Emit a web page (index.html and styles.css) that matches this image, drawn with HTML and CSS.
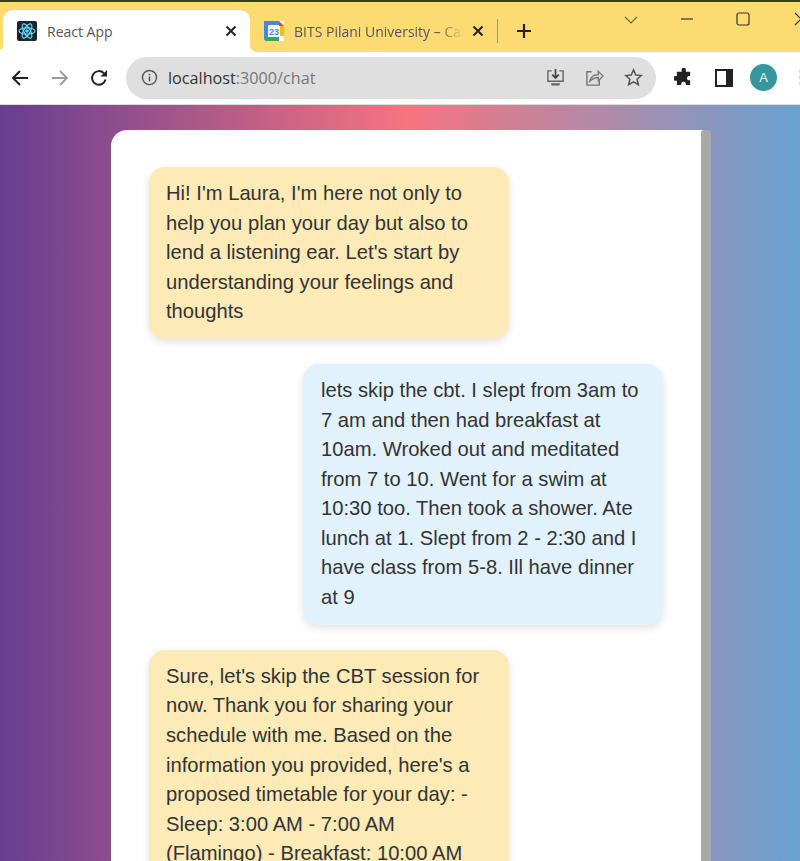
FILE: index.html

```html
<!DOCTYPE html>
<html lang="en">
<head>
  <meta charset="UTF-8">
  <title>React App</title>
  <link rel="stylesheet" href="styles.css">
</head>
<body>
  <!-- browser chrome -->
  <div class="tabstrip">
    <div class="tab active">
      <svg class="favicon" viewBox="0 0 20 20">
        <rect width="20" height="20" rx="2" fill="#20232a"/>
        <g fill="none" stroke="#61dafb" stroke-width="1.200">
          <ellipse cx="10" cy="10" rx="8" ry="3.200"/>
          <ellipse cx="10" cy="10" rx="8" ry="3.200" transform="rotate(60 10 10)"/>
          <ellipse cx="10" cy="10" rx="8" ry="3.200" transform="rotate(120 10 10)"/>
        </g>
        <circle cx="10" cy="10" r="1.800" fill="#61dafb"/>
      </svg>
      <span class="tab-title">React App</span>
      <svg class="tab-close" viewBox="0 0 12 12"><path d="M1.500 1.500l9 9M10.500 1.500l-9 9" stroke="#222" stroke-width="2" fill="none"/></svg>
    </div>
    <div class="tab">
      <svg class="favicon" viewBox="0 0 20 20">
        <rect width="20" height="20" fill="#fff"/>
        <path d="M0 0h15v4H4v12H0z" fill="#4285f4"/>
        <path d="M15 0l5 5h-5z" fill="#ea4335"/>
        <path d="M16 5h4v10h-4z" fill="#fbbc04"/>
        <path d="M0 16h15v4H2a2 2 0 0 1-2-2z" fill="#34a853"/>
        <text x="10" y="13.500" class="cal-num">23</text>
      </svg>
      <span class="tab-title fade">BITS Pilani University – Calendar</span>
      <svg class="tab-close" viewBox="0 0 12 12"><path d="M1.500 1.500l9 9M10.500 1.500l-9 9" stroke="#222" stroke-width="2" fill="none"/></svg>
    </div>
    <div class="tab-sep"></div>
    <svg class="new-tab" viewBox="0 0 16 16"><path d="M8 1v14M1 8h14" stroke="#222" stroke-width="2.200" fill="none"/></svg>
    <div class="window-btns">
      <svg class="win-chevron" viewBox="0 0 14 8"><path d="M1 1l6 6 6-6" stroke="#6f6446" stroke-width="1.200" fill="none"/></svg>
      <svg class="win-min" viewBox="0 0 14 2"><path d="M1 1h12" stroke="#3a3524" stroke-width="1.200"/></svg>
      <svg class="win-max" viewBox="0 0 14 14"><rect x="1" y="1" width="12" height="12" rx="2" stroke="#3a3524" stroke-width="1.200" fill="none"/></svg>
      <svg class="win-close" viewBox="0 0 14 14"><path d="M1 1l12 12M13 1L1 13" stroke="#3a3524" stroke-width="1.200" fill="none"/></svg>
    </div>
  </div>

  <div class="toolbar">
    <div class="nav-btns">
      <svg class="nav-icon" viewBox="0 0 18 18"><path d="M17 9H2M9 2L2 9l7 7" stroke="#222" stroke-width="2" fill="none"/></svg>
      <svg class="nav-icon" viewBox="0 0 18 18"><path d="M1 9h15M9 2l7 7-7 7" stroke="#9a9a9a" stroke-width="1.800" fill="none"/></svg>
      <svg class="nav-icon" viewBox="0 0 18 18"><path d="M15.500 10.500A6.800 6.800 0 1 1 13.800 4.200" stroke="#222" stroke-width="2" fill="none"/><path d="M10.500 7.500H17V1z" fill="#222"/></svg>
    </div>
    <div class="omnibox">
      <svg class="info-icon" viewBox="0 0 18 18"><circle cx="9" cy="9" r="7.500" stroke="#555" stroke-width="1.500" fill="none"/><path d="M9 8v5M9 5v1.500" stroke="#555" stroke-width="1.600"/></svg>
      <span class="url">localhost<span class="url-path">:3000/chat</span></span>
      <div class="omni-actions">
        <svg class="omni-icon" viewBox="0 0 20 20"><path d="M6 3H2v11h16V3h-4" stroke="#666" stroke-width="1.500" fill="none"/><path d="M10 1v9M6.500 7l3.500 3.500L13.500 7" stroke="#444" stroke-width="1.800" fill="none"/><path d="M5 16h10l-1 2.500H6z" fill="#666"/></svg>
        <svg class="omni-icon" viewBox="0 0 20 20"><path d="M7 4H2v14h13v-5" stroke="#777" stroke-width="1.500" fill="none"/><path d="M5 14c1-5 5-7 9-7V3.500l5 5-5 5V10c-3 0-6 1-9 4z" stroke="#777" stroke-width="1.400" fill="none"/></svg>
        <svg class="omni-icon" viewBox="0 0 20 20"><path d="M10 2l2.400 5.400 5.800.6-4.400 3.900 1.300 5.700L10 14.600l-5.100 3 1.300-5.700L1.800 8l5.800-.6z" stroke="#555" stroke-width="1.600" fill="none"/></svg>
      </div>
    </div>
    <svg class="ext-icon" viewBox="0 0 20 20"><path d="M8 1.500a2.300 2.300 0 0 1 4.500 0V4H17v4.500h-1.500a2.300 2.300 0 0 0 0 4.500H17v5h-4.500v-1a2.500 2.500 0 0 0-5 0v1H3v-4.500H1.800a2.500 2.500 0 0 1 0-5H3V4h5z" fill="#222"/></svg>
    <div class="panel-icon"></div>
    <div class="avatar">A</div>
    <div class="more-dots"></div>
  </div>

  <!-- app -->
  <div class="page">
    <div class="chat-card">
      <div class="chat-scroll">
        <div class="msg bot">Hi! I'm Laura, I'm here not only to help you plan your day but also to lend a listening ear. Let's start by understanding your feelings and thoughts</div>
        <div class="msg user">lets skip the cbt. I slept from 3am to 7 am and then had breakfast at 10am. Wroked out and meditated from 7 to 10. Went for a swim at 10:30 too. Then took a shower. Ate lunch at 1. Slept from 2 - 2:30 and I have class from 5-8. Ill have dinner at 9</div>
        <div class="msg bot">Sure, let's skip the CBT session for now. Thank you for sharing your schedule with me. Based on the information you provided, here's a proposed timetable for your day: - Sleep: 3:00 AM - 7:00 AM (Flamingo) - Breakfast: 10:00 AM (Banana) - Workout and meditation: 7:00 AM - 10:00 AM</div>
      </div>
      <div class="scrollbar"></div>
    </div>
  </div>
</body>
</html>
```

FILE: styles.css

```css
html, body { margin: 0; height: 861px; overflow: hidden; }
body { font-family: "Liberation Sans", Arial, sans-serif; display: flex; flex-direction: column; background: #fff; }

/* tab strip */
.tabstrip { height: 50px; flex: none; display: flex; align-items: flex-end; background: #fddb73; border-top: 2px solid #3c3a28; }
.tab { position: relative; width: 247px; height: 42px; flex: none; display: flex; align-items: center; padding: 0 13px 0 14px; box-sizing: border-box; border-radius: 10px 10px 0 0; font-family: "Open Sans", sans-serif; font-size: 14px; color: #555; }
.tab.active { background: #fff; margin-left: 3px; }
/* concave flares at the foot of the active tab */
.tab.active::before, .tab.active::after { content: ""; position: absolute; bottom: 0; width: 8px; height: 8px; }
.tab.active::before { left: -8px; background: radial-gradient(circle at 0 0, #fddb73 8px, #fff 8.500px); }
.tab.active::after { right: -8px; background: radial-gradient(circle at 100% 0, #fddb73 8px, #fff 8.500px); }
.favicon { width: 20px; height: 20px; flex: none; margin-right: 10px; }
.cal-num { font-family: "Liberation Sans", sans-serif; font-size: 9px; fill: #4285f4; text-anchor: middle; font-weight: bold; }
.tab-title { flex: 1; white-space: nowrap; overflow: hidden; min-width: 0; }
.tab-title.fade { -webkit-mask-image: linear-gradient(90deg, #000 85%, transparent 100%); mask-image: linear-gradient(90deg, #000 85%, transparent 100%); }
.tab-close { width: 12px; height: 12px; flex: none; margin-left: 8px; }
.tab-sep { width: 1px; height: 24px; flex: none; background: #a99a63; margin: 0 0 9px 0; }
.new-tab { width: 16px; height: 16px; margin: 0 0 13px 18px; flex: none; }
.window-btns { flex: 1; align-self: stretch; display: flex; align-items: flex-start; padding-top: 10px; min-width: 0; }
.win-chevron { width: 14px; height: 8px; flex: none; margin: 4px 0 0 92px; }
.win-min { width: 14px; height: 2px; flex: none; margin: 6px 0 0 42px; }
.win-max { width: 14px; height: 14px; flex: none; margin: 0 0 0 42px; }
.win-close { width: 14px; height: 14px; flex: none; margin-left: 44px; }

/* toolbar */
.toolbar { height: 53px; flex: none; display: flex; align-items: center; background: #fff; padding: 0 0 1px 11px; box-sizing: border-box; border-bottom: 1px solid #ddd; }
.nav-btns { display: flex; gap: 21.500px; }
.nav-icon { width: 18px; height: 18px; display: block; }
.omnibox { width: 530px; height: 42px; margin-left: 18px; border-radius: 21px; background: #dfdfdf; display: flex; align-items: center; padding: 0 13px 0 15px; box-sizing: border-box; flex: none; }
.info-icon { width: 17px; height: 17px; flex: none; }
.url { font-family: "Open Sans", sans-serif; font-size: 16.200px; color: #333; margin-left: 10px; }
.url-path { color: #777; }
.omni-actions { margin-left: auto; display: flex; gap: 20px; }
.omni-icon { width: 19px; height: 19px; display: block; }
.ext-icon { width: 19px; height: 19px; margin-left: 18px; flex: none; }
.panel-icon { width: 18px; height: 18px; margin-left: 22px; border: 2px solid #222; border-right-width: 7px; box-sizing: border-box; flex: none; }
.avatar { width: 27px; height: 27px; border-radius: 50%; background: #36969f; color: #e8f4f4; font-size: 13px; display: flex; align-items: center; justify-content: center; margin-left: 17px; flex: none; }
.more-dots { width: 3px; height: 3px; border-radius: 50%; background: #ccc; box-shadow: 0 6px #ccc, 0 12px #ccc; margin: -12px 0 0 22px; flex: none; }

/* page */
.page { flex: 1; min-height: 0; overflow: hidden; padding: 25px 89px 0 111px; background: linear-gradient(90deg, #653e92 0%, #f7747f 51%, #69a1d1 100%); }
.chat-card { height: 800px; display: flex; background: #fff; border-radius: 16px 6px 0 0; }
.chat-scroll { flex: 1; min-width: 0; padding: 37px 38px 0 38px; display: flex; flex-direction: column; gap: 25.400px; }
.scrollbar { width: 10px; flex: none; background: #a9a9a9; border-radius: 3px 3px 0 0; }

.msg { width: 360px; box-sizing: border-box; padding: 12px 18px 12px 17px; border-radius: 16px; font-size: 20.200px; line-height: 29.550px; color: #333; box-shadow: 0 3px 8px rgba(0,0,0,0.12); }
.bot { background: #fceab7; align-self: flex-start; }
.user { background: #e2f2fc; align-self: flex-end; padding-left: 18px; }
```
